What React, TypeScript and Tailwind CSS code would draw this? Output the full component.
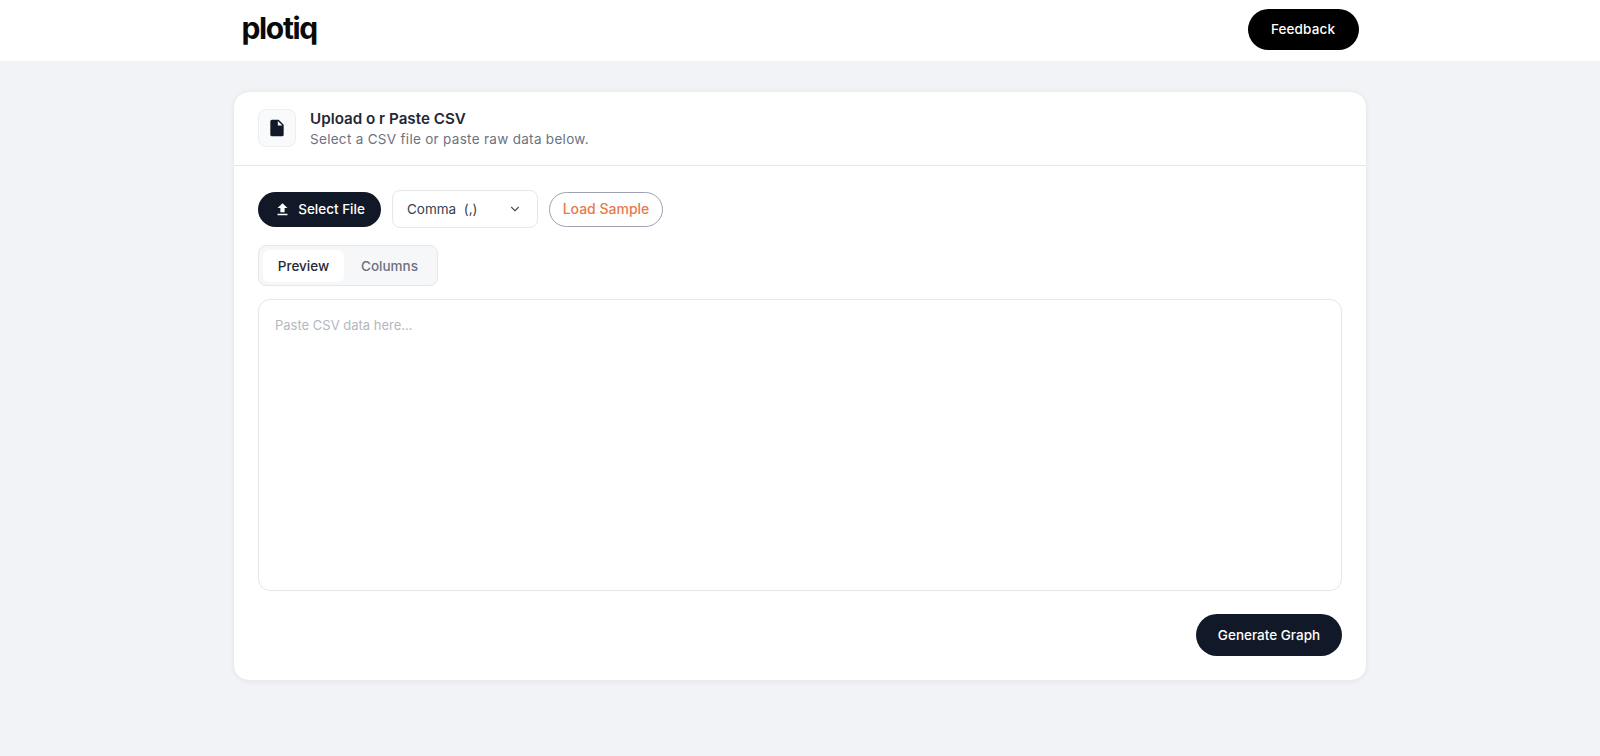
import { ChevronDown } from 'lucide-react';

const sans = "font-['Inter',sans-serif]";

function FileGlyph() {
  return (
    <svg viewBox="0 0 24 24" className="size-[20px] text-[#111827]" fill="currentColor">
      <path d="M6 2h8l6 6v12a2 2 0 0 1-2 2H6a2 2 0 0 1-2-2V4a2 2 0 0 1 2-2Zm7 1.5V9h5.5L13 3.5Z" />
    </svg>
  );
}

function UploadGlyph() {
  return (
    <svg viewBox="0 0 24 24" className="size-[17px] text-white" fill="currentColor">
      <path d="M9 16h6v-6h4l-7-7-7 7h4v6Zm-4 2h14v2H5v-2Z" />
    </svg>
  );
}

export default function App() {
  return (
    <div className={`${sans} min-h-[756px] bg-[#f2f3f7] flex flex-col items-center`}>
      <header className="w-full h-[61px] bg-white flex justify-center">
        <div className="w-[1117px] h-[59px] flex items-center justify-between">
          <span className="text-[30px] font-bold tracking-[-0.045em] leading-none text-[#0a0a0a] -mt-1">plotiq</span>
          <button className="w-[111px] h-[41px] rounded-full bg-black text-white text-[13.5px] font-medium tracking-[0.01em]">Feedback</button>
        </div>
      </header>

      <main className="w-[1134px] h-[590px] mt-[30px] bg-white rounded-2xl border border-[#eaecf0] shadow-[0_1px_5px_rgba(0,0,0,0.05)] flex flex-col">
        <div className="h-[74px] border-b border-[#e5e7eb] px-6 flex items-center gap-[14px] shrink-0">
          <div className="size-[38px] -mt-[2px] rounded-lg bg-[#f9fafb] border border-[#eceef1] flex items-center justify-center">
            <FileGlyph />
          </div>
          <div>
            <div className="text-[15.2px] leading-[21px] font-semibold text-[#1f2937]">Upload o r Paste CSV</div>
            <div className="text-[13.5px] leading-5 tracking-[0.3px] text-[#6b7280]">Select a CSV file or paste raw data below.</div>
          </div>
        </div>

        <div className="flex-1 px-6 pt-6 pb-6 flex flex-col">
          <div className="flex items-center gap-[11px]">
            <button className="w-[123px] h-[35px] rounded-full bg-[#111827] text-white text-[13.5px] font-medium flex items-center justify-center gap-[7px]">
              <UploadGlyph />
              Select File
            </button>
            <div className="w-[146px] h-[38px] rounded-lg border border-[#e5e7eb] bg-white pl-[14px] pr-[15px] flex items-center justify-between text-[13.5px] text-[#374151]">
              <span className="whitespace-pre">Comma  (,)</span>
              <ChevronDown className="size-[14px] text-[#4b5563]" />
            </div>
            <button className="w-[114px] h-[35px] rounded-full border border-[#9ca3af] bg-white text-sm font-medium text-[#e9784a]">Load Sample</button>
          </div>

          <div className="mt-[17px] w-[180px] h-[41px] rounded-lg border border-[#e5e7eb] bg-[#f6f7f9] p-1 pb-[3px] flex items-stretch text-[13.5px] font-medium">
            <div className="w-[81px] pt-px rounded-md bg-white text-[#1f2937] flex items-center justify-center">Preview</div>
            <div className="flex-1 pt-px pl-[2px] text-[#6b7280] flex items-center justify-center">Columns</div>
          </div>

          <div className="mt-[13px] h-[292px] rounded-xl border border-[#e5e7eb] bg-white px-4 py-4 text-[13px] leading-[18px] text-[#b4b8bf]">
            Paste CSV data here...
          </div>

          <div className="mt-[23px] flex justify-end">
            <button className="w-[146px] h-[42px] rounded-full bg-[#111827] text-white text-[13.5px] font-medium">Generate Graph</button>
          </div>
        </div>
      </main>
    </div>
  );
}
